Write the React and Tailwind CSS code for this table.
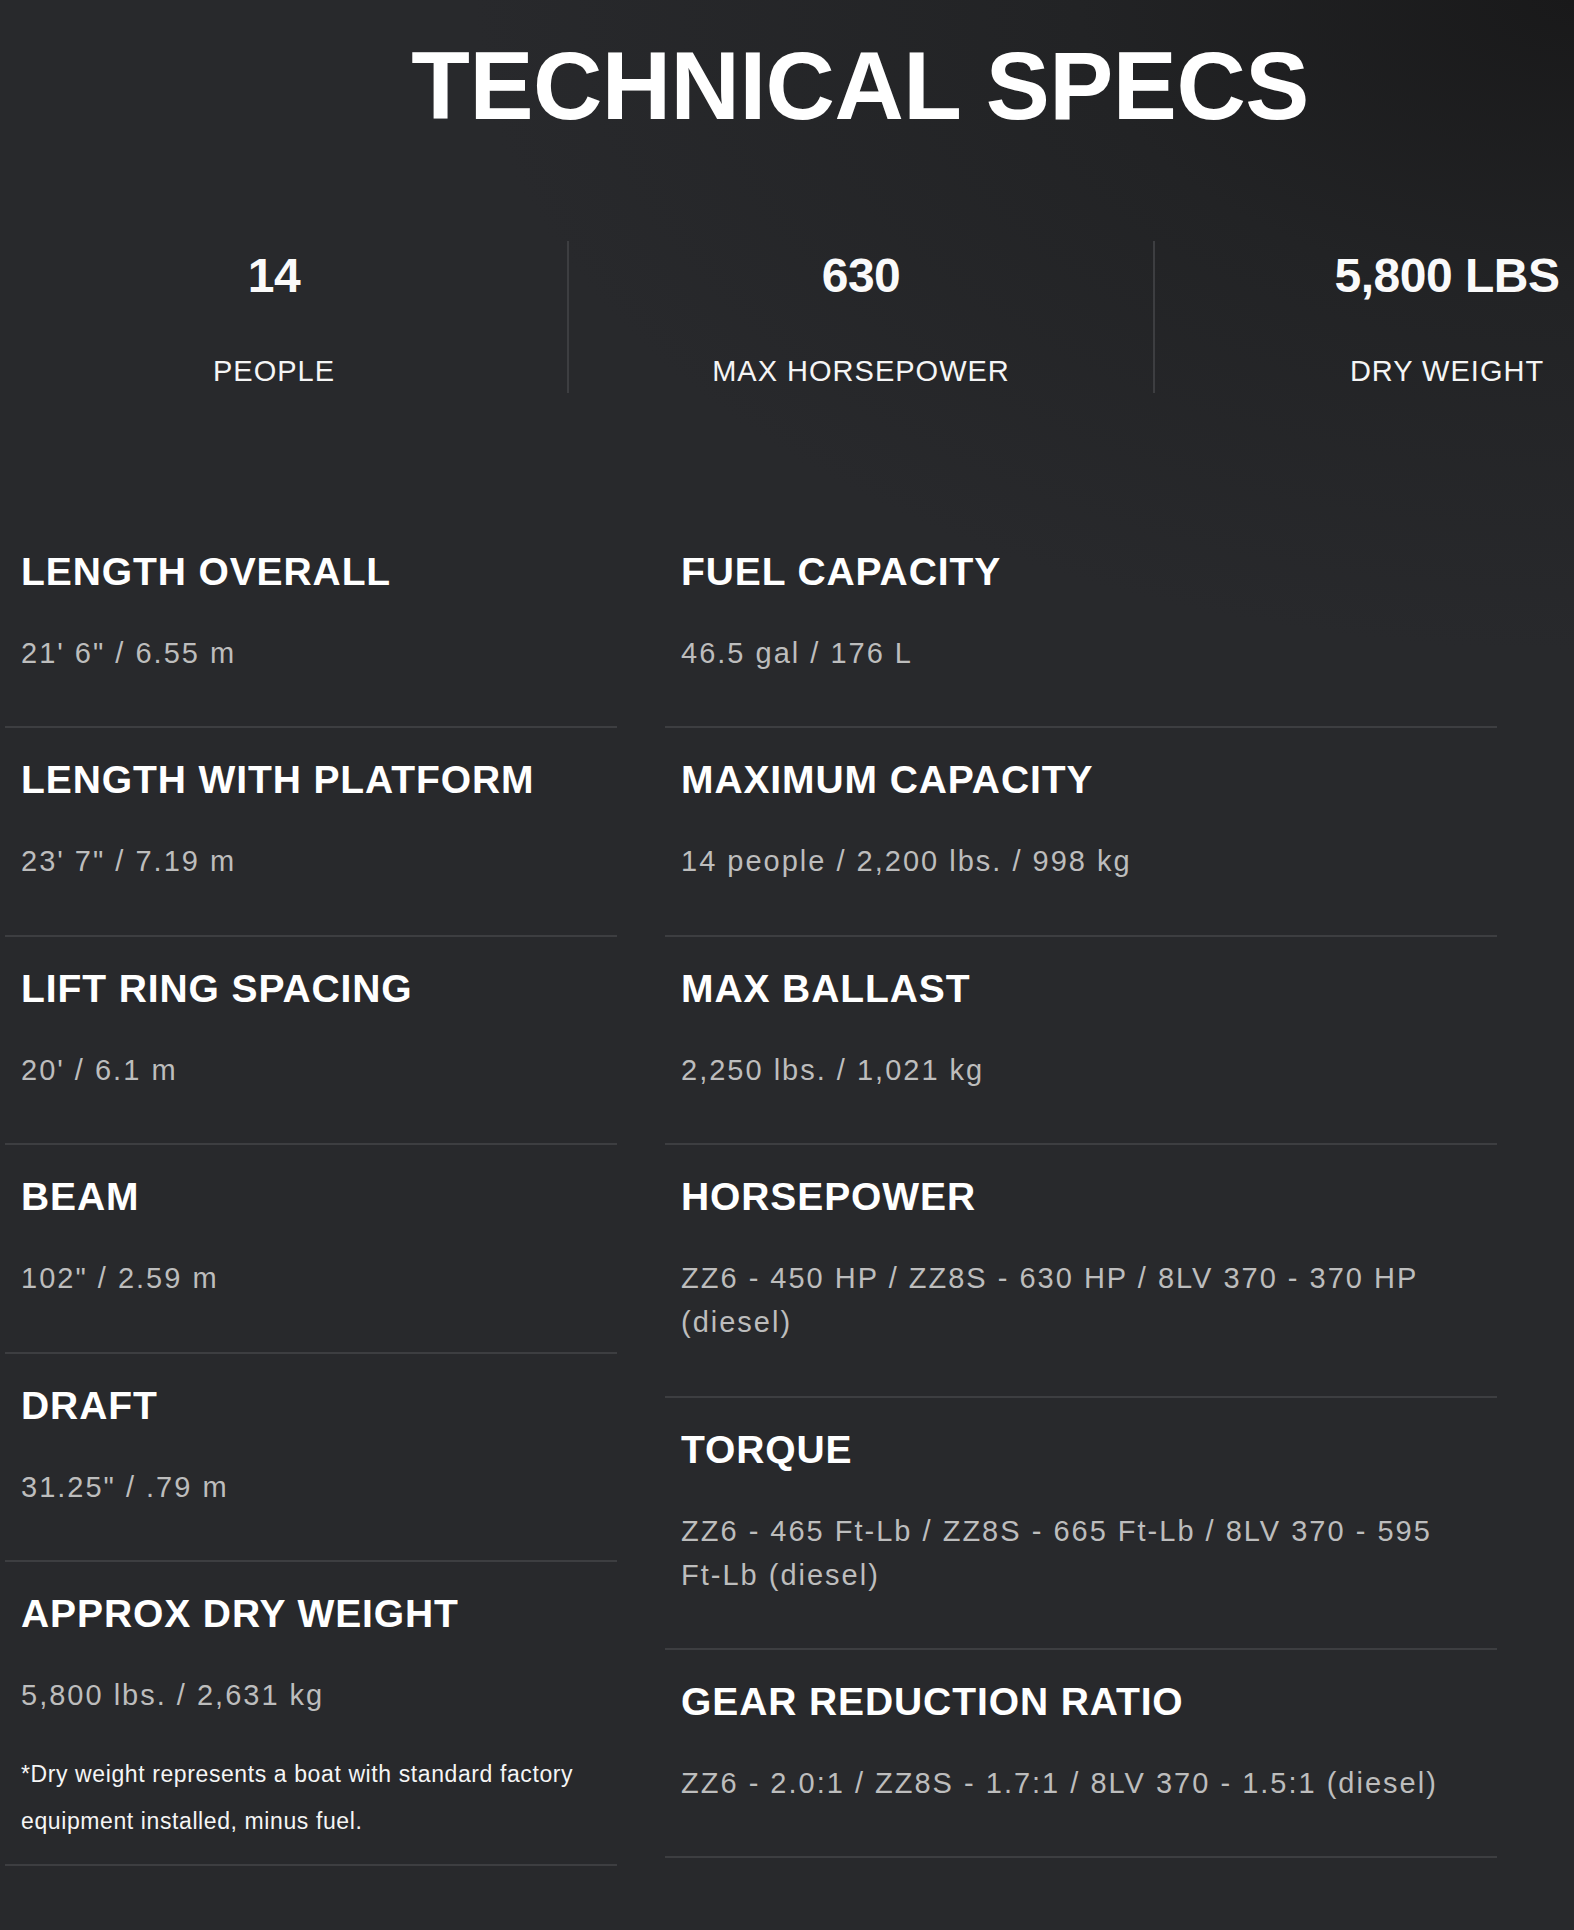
import React from "react";

const stats = [
  { value: "14", label: "PEOPLE" },
  { value: "630", label: "MAX HORSEPOWER" },
  { value: "5,800 LBS", label: "DRY WEIGHT" },
];

const left = [
  { title: "LENGTH OVERALL", value: "21' 6\" / 6.55 m" },
  { title: "LENGTH WITH PLATFORM", value: "23' 7\" / 7.19 m" },
  { title: "LIFT RING SPACING", value: "20' / 6.1 m" },
  { title: "BEAM", value: "102\" / 2.59 m" },
  { title: "DRAFT", value: "31.25\" / .79 m" },
  {
    title: "APPROX DRY WEIGHT",
    value: "5,800 lbs. / 2,631 kg",
    note: "*Dry weight represents a boat with standard factory equipment installed, minus fuel.",
  },
];

const right = [
  { title: "FUEL CAPACITY", value: "46.5 gal / 176 L" },
  { title: "MAXIMUM CAPACITY", value: "14 people / 2,200 lbs. / 998 kg" },
  { title: "MAX BALLAST", value: "2,250 lbs. / 1,021 kg" },
  { title: "HORSEPOWER", value: "ZZ6 - 450 HP / ZZ8S - 630 HP / 8LV 370 - 370 HP (diesel)" },
  { title: "TORQUE", value: "ZZ6 - 465 Ft-Lb / ZZ8S - 665 Ft-Lb / 8LV 370 - 595 Ft-Lb (diesel)" },
  { title: "GEAR REDUCTION RATIO", value: "ZZ6 - 2.0:1 / ZZ8S - 1.7:1 / 8LV 370 - 1.5:1 (diesel)" },
];

function Words({ text }) {
  const words = text.split(" ");
  return words.map((w, i) => (
    <React.Fragment key={i}>
      <span className="whitespace-nowrap">{w}</span>
      {i < words.length - 1 ? " " : ""}
    </React.Fragment>
  ));
}

function SpecRow({ item }) {
  return (
    <div
      className={
        item.note
          ? "border-b-2 border-[#3d3e41] px-4 pt-[28px] pb-[19px]"
          : "border-b-2 border-[#3d3e41] px-4 pt-[28px] pb-[51.4px]"
      }
    >
      <h3 className="text-[39px] leading-[48px] font-bold tracking-[0.9px] text-white">
        {item.title}
      </h3>
      <p className="mt-[35px] text-[29px] leading-[44px] tracking-[2px] text-[#bdbdbd]">
        <Words text={item.value} />
      </p>
      {item.note && (
        <p className="mt-[34px] text-[23px] leading-[47px] tracking-[0.6px] text-[#f5f5f5]">
          {item.note}
        </p>
      )}
    </div>
  );
}

export default function App() {
  return (
    <div className="min-h-[1930px] w-full overflow-hidden bg-[#28292c] bg-[radial-gradient(ellipse_1100px_650px_at_100%_0%,#19191a_0%,#222325_45%,#28292c_100%)] font-['Liberation_Sans',Arial,sans-serif]">
      <div className="ml-[-19px] w-[1758px] pt-[38px]">
        <h1 className="text-center text-[96px] leading-[96px] font-bold tracking-[-0.5px] text-white">
          TECHNICAL SPECS
        </h1>
        <div className="mt-[107px] grid grid-cols-3">
          {stats.map((s, i) => (
            <div
              key={s.label}
              className={
                i > 0
                  ? "flex flex-col items-center border-l-2 border-[#3d3e41] pt-[11px] pb-[4px]"
                  : "flex flex-col items-center pt-[11px] pb-[4px]"
              }
            >
              <div className="text-[48px] leading-[48px] font-bold tracking-[-0.5px] text-[#fafafa]">
                {s.value}
              </div>
              <div className="mt-[53px] text-[29px] leading-[36px] tracking-[1px] text-[#f5f5f5]">
                {s.label}
              </div>
            </div>
          ))}
        </div>
      </div>

      <div className="ml-[5px] mt-[127px] flex items-start gap-[48px]">
        <div className="w-[612px]">
          {left.map((item) => (
            <SpecRow key={item.title} item={item} />
          ))}
        </div>
        <div className="w-[832px]">
          {right.map((item) => (
            <SpecRow key={item.title} item={item} />
          ))}
        </div>
      </div>
    </div>
  );
}
